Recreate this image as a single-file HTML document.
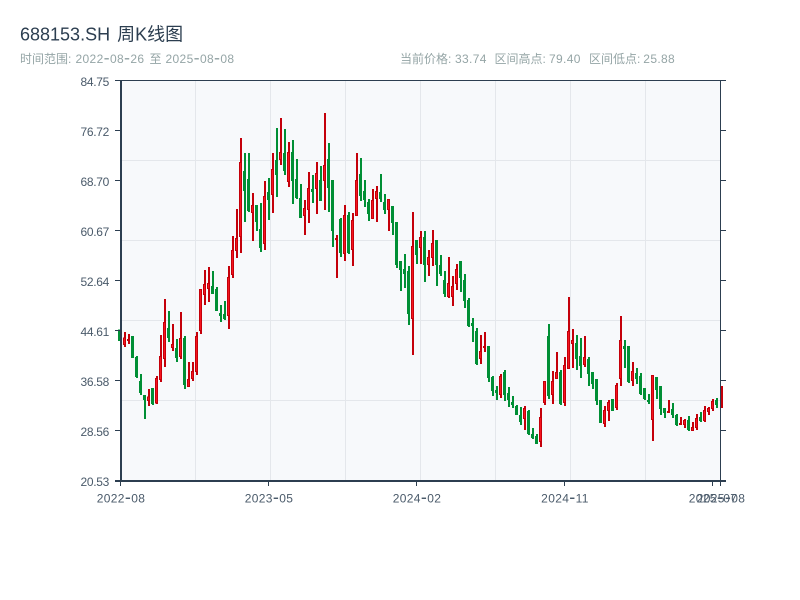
<!DOCTYPE html>
<html>
<head>
<meta charset="utf-8">
<title>688153.SH 周K线图</title>
<style>
html,body{margin:0;padding:0;background:#fff;width:800px;height:600px;overflow:hidden}
svg{display:block;position:absolute;left:0;top:0}
text{font-family:"Liberation Sans","WenQuanYi Zen Hei","Noto Sans CJK SC",sans-serif}
.t{font-size:18px;fill:#2c3e50}
.s{font-size:12px;fill:#95a5a6}
.l{letter-spacing:.35px}
.y{font-size:12px;fill:#4a5a6a;text-anchor:end;letter-spacing:-.3px}
.x{font-size:12px;fill:#4a5a6a;text-anchor:middle;letter-spacing:.35px}
.d{font-size:18px}
.rw{stroke:#c4000a;stroke-width:2;fill:none}
.rb{stroke:#c4000a;stroke-width:3;fill:none}
.gw{stroke:#008f35;stroke-width:2;fill:none}
.gb{stroke:#008f35;stroke-width:3;fill:none}
</style>
</head>
<body>
<svg width="800" height="600" viewBox="0 0 800 600" shape-rendering="crispEdges">
<rect x="0" y="0" width="800" height="600" fill="#fff"/>
<g shape-rendering="auto">
<text class="t" x="20" y="40.5">688153.SH <tspan dx="2">周K线图</tspan></text>
<text class="s" x="20" y="63">时间范围: <tspan class="l" x="75.500">2022<tspan class="d" dy=".7">-</tspan><tspan dy="-.7">08</tspan><tspan class="d" dy=".7">-</tspan><tspan dy="-.7">26</tspan></tspan> <tspan x="149.500">至</tspan> <tspan class="l" x="165.500">2025<tspan class="d" dy=".7">-</tspan><tspan dy="-.7">08</tspan><tspan class="d" dy=".7">-</tspan><tspan dy="-.7">08</tspan></tspan></text>
<text class="s" x="400" y="63">当前价格: <tspan class="l" x="455">33.74</tspan></text>
<text class="s" x="494.5" y="63">区间高点: <tspan class="l" x="549">79.40</tspan></text>
<text class="s" x="589" y="63">区间低点: <tspan class="l" x="643.300">25.88</tspan></text>
</g>

<rect x="121" y="81" width="599" height="399" fill="#f7f9fb"/>
<path d="M195.5 81V480M270.5 81V480M345.5 81V480M420.5 81V480M495.5 81V480M570.5 81V480M645.5 81V480M121 160.5H720M121 240.5H720M121 320.5H720M121 400.5H720" stroke="#e4e7eb" stroke-width="1" fill="none"/>

<!-- group A -->
<g transform="translate(0,260) scale(1,0.33333)">
<path class="gw" d="M120 208V243M133 228V294M137 288V354M141 342V405M145 405V477M153 384V435M169 153V246M177 237V306M185 228V387M213 33V102M217 81V153M221 135V186M225 123V180"/>
<path class="gb" d="M119.5 208V243M132.500 228V294M136.500 291V351M140.500 363V399M144.500 405V420M152.500 384V432M168.500 204V234M176.500 264V294M184.500 234V375M212.500 78V102M216.500 87V153M220.500 159V168M224.500 162V177"/>
<path class="rw" d="M125 216V261M129 222V252M149 387V438M157 348V432M161 225V366M165 117V321M173 192V273M181 156V297M189 306V381M193 306V363M197 216V345M201 87V222M205 30V135M209 21V126M229 18V207"/>
<path class="rb" d="M124.500 232V255M128.500 237V243M148.500 409V423M156.500 354V430M160.500 288V360M164.500 186V297M172.500 252V264M180.500 234V291M188.500 357V381M192.500 333V357M196.500 228V336M200.500 87V213M204.500 72V105M208.500 69V87M228.500 51V168"/>
<path stroke="#f5141e" stroke-width="1" fill="none" d="M124.500 235V252M148.500 412V420M156.500 357V427M160.500 291V357M164.500 189V294M172.500 255V261M180.500 237V288M188.500 360V378M192.500 336V354M196.500 231V333M200.500 90V210M204.500 75V102M208.500 72V84M228.500 54V165"/>
</g>
<!-- group B -->
<g transform="translate(0,110) scale(1,0.33333)">
<path class="gw" d="M245 129V336M249 129V306M257 285V363M261 279V426M269 204V330M277 54V261M285 57V195M293 90V282M297 147V267M301 222V324M313 195V279M321 168V273M329 99V306M333 210V411M341 324V441M349 306V432"/>
<path class="gb" d="M244.500 183V243M248.500 207V303M256.500 285V336M260.500 357V414M268.500 246V270M276.500 150V195M284.500 129V183M292.500 126V213M296.500 207V264M300.500 264V324M312.500 237V246M320.500 210V273M328.500 147V234M332.500 210V363M340.500 327V429M348.500 315V429"/>
<path class="rw" d="M233 378V504M237 297V444M241 84V429M253 249V393M265 213V420M273 129V309M281 24V165M289 96V231M305 270V375M309 186V339M317 156V312M325 9V300M337 375V504M345 285V453"/>
<path class="rb" d="M232.500 420V495M236.500 384V423M240.500 156V381M252.500 285V309M264.500 258V402M272.500 177V255M280.500 126V150M288.500 126V216M304.500 294V318M308.500 234V300M316.500 189V237M324.500 165V213M336.500 384V390M344.500 315V432"/>
<path stroke="#f5141e" stroke-width="1" fill="none" d="M232.500 423V492M236.500 387V420M240.500 159V378M252.500 288V306M264.500 261V399M272.500 180V252M280.500 129V147M288.500 129V213M304.500 297V315M308.500 237V297M316.500 192V234M324.500 168V210M344.500 318V429"/>
</g>
<!-- group C -->
<g transform="translate(0,150) scale(1,0.33333)">
<path class="gw" d="M361 24V153M365 90V171M369 147V213M381 72V156M385 132V192M393 168V255M397 216V354M401 333V423M405 312V414M409 348V525M417 270V342M425 243V396M437 270V408M441 315V378M445 363V441"/>
<path class="gb" d="M360.500 72V138M364.500 123V150M368.500 156V192M380.500 126V147M384.500 156V180M392.500 168V219M396.500 216V345M400.500 333V360M404.500 357V372M408.500 363V492M416.500 270V315M424.500 261V345M436.500 270V345M440.500 345V372M444.500 390V432"/>
<path class="rw" d="M353 189V348M357 9V198M373 117V207M377 108V216M389 147V243M413 186V615M421 243V342M429 300V378M433 240V348M449 321V444M453 378V468M457 342V420"/>
<path class="rb" d="M352.500 210V300M356.500 90V198M372.500 150V207M376.500 123V147M388.500 147V180M412.500 288V507M420.500 261V294M428.500 321V345M432.500 279V324M448.500 399V441M452.500 408V441M456.500 357V402"/>
<path stroke="#f5141e" stroke-width="1" fill="none" d="M352.500 213V297M356.500 93V195M372.500 153V204M376.500 126V144M388.500 150V177M412.500 291V504M420.500 264V291M428.500 324V342M432.500 282V321M448.500 402V438M452.500 411V438M456.500 360V399"/>
</g>
<!-- group D -->
<g transform="translate(0,250) scale(1,0.33333)">
<path class="gw" d="M461 33V126M465 72V174M469 144V231M473 204V276M477 234V345M489 288V396M493 378V438M497 408V450M505 360V453M509 411V471M513 438V474M517 465V495M521 471V525M529 480V555M533 534V567M537 552V582M549 222V447"/>
<path class="gb" d="M460.500 33V84M464.500 90V153M468.500 150V228M472.500 219V228M476.500 243V342M488.500 288V384M492.500 381V423M496.500 420V429M504.500 366V435M508.500 429V450M512.500 456V465M516.500 468V495M520.500 495V516M528.500 483V552M532.500 552V564M536.500 558V582M548.500 258V438"/>
<path class="rw" d="M481 255V342M485 246V306M501 372V444M525 468V540M541 474V591M545 393V465M553 363V462"/>
<path class="rb" d="M480.500 303V327M484.500 288V294M500.500 378V435M524.500 474V507M540.500 501V576M544.500 393V459M552.500 393V435"/>
<path stroke="#f5141e" stroke-width="1" fill="none" d="M480.500 306V324M500.500 381V432M524.500 477V504M540.500 504V573M544.500 396V456M552.500 396V432"/>
</g>
<!-- group E -->
<g transform="translate(0,290) scale(1,0.33333)">
<path class="gw" d="M561 240V345M577 135V240M581 144V264M589 201V288M593 246V297M597 267V345M601 330V399M613 327V363M625 150V234M629 168V279M637 234V282M641 249V315M645 294V330M649 312V342M657 261V327M661 288V375M665 354V384M673 339V384M677 372V408M689 378V423M701 366V396M717 324V354"/>
<path class="gb" d="M560.500 246V342M576.500 159V207M580.500 198V228M588.500 207V252M592.500 246V282M596.500 267V333M600.500 330V399M612.500 327V363M624.500 168V177M628.500 168V276M636.500 249V267M640.500 258V312M644.500 294V327M648.500 330V336M656.500 261V300M660.500 288V357M664.500 354V369M672.500 357V375M676.500 375V405M688.500 390V420M700.500 381V393M716.500 330V345"/>
<path class="rw" d="M557 186V267M565 201V348M569 21V237M573 117V234M585 138V231M605 348V411M609 330V393M617 279V360M621 78V288M633 216V288M653 255V453M669 330V369M681 381V405M685 387V414M693 396V423M697 372V420M705 348V396M709 351V375M713 327V363"/>
<path class="rb" d="M556.500 246V267M564.500 225V339M568.500 123V237M572.500 150V162M584.500 201V225M604.500 360V402M608.500 336V363M616.500 285V354M620.500 150V267M632.500 243V273M652.500 255V390M668.500 363V369M680.500 399V405M684.500 390V405M692.500 411V423M696.500 384V414M704.500 360V393M708.500 354V366M712.500 333V357"/>
<path stroke="#f5141e" stroke-width="1" fill="none" d="M556.500 249V264M564.500 228V336M568.500 126V234M572.500 153V159M584.500 204V222M604.500 363V399M608.500 339V360M616.500 288V351M620.500 153V264M632.500 246V270M652.500 258V387M684.500 393V402M692.500 414V420M696.500 387V411M704.500 363V390M708.500 357V363M712.500 336V354"/>
<path stroke="#c4000a" stroke-width="2" fill="none" d="M722 288V354"/>
</g>

<!-- axes -->
<g fill="#2c3e50">
<rect x="115" y="80" width="611" height="1"/>
<rect x="120" y="80" width="2" height="402"/>
<rect x="720" y="80" width="1" height="402"/>
<rect x="115" y="480" width="611" height="2"/>
<rect x="115" y="130" width="5" height="1"/><rect x="115" y="180" width="5" height="1"/><rect x="115" y="230" width="5" height="1"/><rect x="115" y="280" width="5" height="1"/><rect x="115" y="330" width="5" height="1"/><rect x="115" y="380" width="5" height="1"/><rect x="115" y="430" width="5" height="1"/>
<rect x="721" y="130" width="5" height="1"/><rect x="721" y="180" width="5" height="1"/><rect x="721" y="230" width="5" height="1"/><rect x="721" y="280" width="5" height="1"/><rect x="721" y="330" width="5" height="1"/><rect x="721" y="380" width="5" height="1"/><rect x="721" y="430" width="5" height="1"/>
<rect x="120" y="482" width="1" height="4"/><rect x="268" y="482" width="1" height="4"/><rect x="416" y="482" width="1" height="4"/><rect x="564" y="482" width="1" height="4"/><rect x="712" y="482" width="1" height="4"/><rect x="720" y="482" width="1" height="4"/>
</g>

<g shape-rendering="auto">
<text class="y" x="109" y="86">84.75</text>
<text class="y" x="109" y="136">76.72</text>
<text class="y" x="109" y="186">68.70</text>
<text class="y" x="109" y="236">60.67</text>
<text class="y" x="109" y="286">52.64</text>
<text class="y" x="109" y="336">44.61</text>
<text class="y" x="109" y="386">36.58</text>
<text class="y" x="109" y="436">28.56</text>
<text class="y" x="109" y="486">20.53</text>
<text class="x" x="121" y="502.500">2022<tspan class="d" dy=".7">-</tspan><tspan dy="-.7">08</tspan></text>
<text class="x" x="269" y="502.500">2023<tspan class="d" dy=".7">-</tspan><tspan dy="-.7">05</tspan></text>
<text class="x" x="417" y="502.500">2024<tspan class="d" dy=".7">-</tspan><tspan dy="-.7">02</tspan></text>
<text class="x" x="565" y="502.500">2024<tspan class="d" dy=".7">-</tspan><tspan dy="-.7">11</tspan></text>
<text class="x" x="713" y="502.500">2025<tspan class="d" dy=".7">-</tspan><tspan dy="-.7">07</tspan></text>
<text class="x" x="721" y="502.500">2025<tspan class="d" dy=".7">-</tspan><tspan dy="-.7">08</tspan></text>
</g>
</svg>
</body>
</html>
